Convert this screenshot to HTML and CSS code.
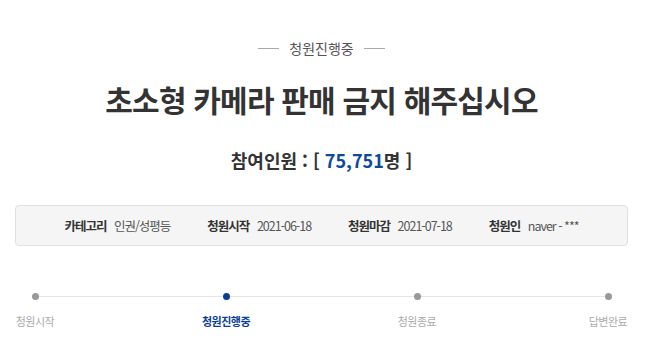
FILE: index.html
```html
<!DOCTYPE html>
<html lang="ko">
<head>
    <meta charset="UTF-8">
    <meta name="viewport" content="width=device-width, initial-scale=1.0">
    <title>청원진행중</title>
    <link rel="stylesheet" href="styles.css">
</head>
<body>
    <div class="petition">
        <div class="status">
            <span class="status-line"></span>
            <span class="status-text">청원진행중</span>
            <span class="status-line"></span>
        </div>
        <h1 class="title">초소형 카메라 판매 금지 해주십시오</h1>
        <div class="count">참여인원 : [ <span class="count-num">75,751</span>명 ]</div>
        <ul class="info">
            <li><strong>카테고리</strong> 인권/성평등</li>
            <li><strong>청원시작</strong> 2021-06-18</li>
            <li><strong>청원마감</strong> 2021-07-18</li>
            <li><strong>청원인</strong> naver - ***</li>
        </ul>
        <div class="progress">
            <div class="progress-track"></div>
            <div class="step">
                <span class="dot"></span>
                <span class="label">청원시작</span>
            </div>
            <div class="step active">
                <span class="dot"></span>
                <span class="label">청원진행중</span>
            </div>
            <div class="step">
                <span class="dot"></span>
                <span class="label">청원종료</span>
            </div>
            <div class="step">
                <span class="dot"></span>
                <span class="label">답변완료</span>
            </div>
        </div>
    </div>
</body>
</html>
```

FILE: styles.css
```css
body {
    margin: 0;
    background-color: #fff;
    color: #333;
    font-family: "Noto Sans CJK KR", "Noto Sans", sans-serif;
}
.petition {
    padding: 36px 19px 0 15px;
}
.status {
    display: flex;
    justify-content: center;
    align-items: center;
    gap: 10px;
    color: #555;
    font-size: 14px;
    line-height: 24px;
}
.status-line {
    width: 21px;
    height: 1px;
    background-color: #aaa;
}
.title {
    margin: 19px 0 0;
    text-align: center;
    font-size: 30px;
    font-weight: 700;
    line-height: 40px;
    color: #333;
    letter-spacing: -0.8px;
}
.count {
    margin-top: 28px;
    text-align: center;
    font-size: 18px;
    font-weight: 700;
    line-height: 26px;
}
.count-num {
    color: #0b4aa0;
}
.info {
    list-style: none;
    margin: 32px 0 0;
    padding: 0;
    height: 39px;
    display: flex;
    justify-content: center;
    align-items: center;
    gap: 37px;
    background-color: #f5f5f5;
    border: 1px solid #e0e0e0;
    border-radius: 4px;
    font-size: 12.5px;
    letter-spacing: -1px;
    color: #555;
}
.info strong {
    color: #333;
    margin-right: 5px;
}
.progress {
    position: relative;
    display: flex;
    justify-content: space-between;
    margin-top: 45px;
}
.progress-track {
    position: absolute;
    left: 20px;
    right: 20px;
    top: 5px;
    height: 1px;
    background-color: #e5e5e5;
}
.step {
    position: relative;
    width: 40px;
    display: flex;
    flex-direction: column;
    align-items: center;
}
.dot {
    width: 7px;
    height: 7px;
    margin-top: 2px;
    border-radius: 50%;
    background-color: #999;
}
.label {
    margin-top: 13px;
    font-size: 11px;
    letter-spacing: -0.5px;
    white-space: nowrap;
    color: #aaa;
}
.step.active .dot {
    background-color: #0b3f96;
}
.step.active .label {
    color: #0b3f96;
    font-weight: 700;
}
```
